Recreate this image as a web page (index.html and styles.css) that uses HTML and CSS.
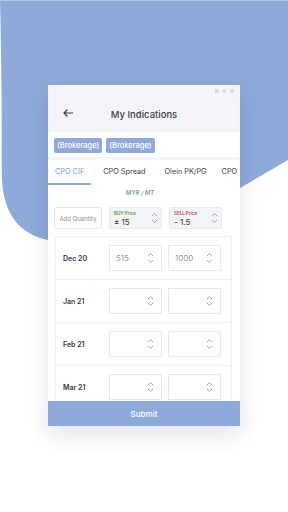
FILE: index.html
```html
<!DOCTYPE html>
<html lang="en">
<head>
  <meta charset="UTF-8">
  <title>My Indications</title>
  <link rel="stylesheet" href="styles.css">
</head>
<body>

  <svg class="backdrop" width="288" height="260" viewBox="0 0 288 260">
    <path d="M0 0 H288 V160 L240 188 C160 235 90 250 48 240 C20 234 4 215 2 180 C1 150 3 130 0 0 Z" fill="#8daadb"/>
    <rect x="0" y="0" width="288" height="1" fill="#b4c6e8"/>
  </svg>

  <div class="card">
    <div class="statusbar">
      <span class="sb-square"></span>
      <span class="sb-dot"></span>
      <span class="sb-tri"></span>
    </div>

    <div class="appbar">
      <svg class="back" width="10" height="8" viewBox="0 0 10 8">
        <path d="M9.5 4 H1 M4 1 L1 4 L4 7" fill="none" stroke="#333a45" stroke-width="1.2" stroke-linecap="round" stroke-linejoin="round"/>
      </svg>
      <h1 class="title">My Indications</h1>
    </div>

    <div class="chips">
      <span class="chip">(Brokerage)</span>
      <span class="chip">(Brokerage)</span>
    </div>

    <div class="tabs">
      <span class="tab active">CPO CIF</span>
      <span class="tab">CPO Spread</span>
      <span class="tab">Olein PK/PG</span>
      <span class="tab">CPO</span>
    </div>

    <div class="content">
      <div class="unit">MYR / MT</div>

      <div class="price-row">
        <div class="qty">Add Quantity</div>
        <div class="price-box">
          <div class="price-text">
            <span class="price-label buy">BUY Price</span>
            <span class="price-value">± 15</span>
          </div>
          <svg class="spin" width="7" height="12" viewBox="0 0 7 12"><path d="M1 4 L3.5 1.5 L6 4 M1 8 L3.5 10.5 L6 8" fill="none" stroke="#8e9bb8" stroke-width="0.9"/></svg>
        </div>
        <div class="price-box">
          <div class="price-text">
            <span class="price-label sell">SELL Price</span>
            <span class="price-value">- 1.5</span>
          </div>
          <svg class="spin" width="7" height="12" viewBox="0 0 7 12"><path d="M1 4 L3.5 1.5 L6 4 M1 8 L3.5 10.5 L6 8" fill="none" stroke="#8e9bb8" stroke-width="0.9"/></svg>
        </div>
      </div>

      <div class="grid">
        <div class="grid-row">
          <span class="month">Dec 20</span>
          <div class="cell"><span class="cell-value">515</span><svg class="spin" width="7" height="12" viewBox="0 0 7 12"><path d="M1 4 L3.5 1.5 L6 4 M1 8 L3.5 10.5 L6 8" fill="none" stroke="#8e9bb8" stroke-width="0.9"/></svg></div>
          <div class="cell"><span class="cell-value">1000</span><svg class="spin" width="7" height="12" viewBox="0 0 7 12"><path d="M1 4 L3.5 1.5 L6 4 M1 8 L3.5 10.5 L6 8" fill="none" stroke="#8e9bb8" stroke-width="0.9"/></svg></div>
        </div>
        <div class="grid-row">
          <span class="month">Jan 21</span>
          <div class="cell"><span class="cell-value"></span><svg class="spin" width="7" height="12" viewBox="0 0 7 12"><path d="M1 4 L3.5 1.5 L6 4 M1 8 L3.5 10.5 L6 8" fill="none" stroke="#8e9bb8" stroke-width="0.9"/></svg></div>
          <div class="cell"><span class="cell-value"></span><svg class="spin" width="7" height="12" viewBox="0 0 7 12"><path d="M1 4 L3.5 1.5 L6 4 M1 8 L3.5 10.5 L6 8" fill="none" stroke="#8e9bb8" stroke-width="0.9"/></svg></div>
        </div>
        <div class="grid-row">
          <span class="month">Feb 21</span>
          <div class="cell"><span class="cell-value"></span><svg class="spin" width="7" height="12" viewBox="0 0 7 12"><path d="M1 4 L3.5 1.5 L6 4 M1 8 L3.5 10.5 L6 8" fill="none" stroke="#8e9bb8" stroke-width="0.9"/></svg></div>
          <div class="cell"><span class="cell-value"></span><svg class="spin" width="7" height="12" viewBox="0 0 7 12"><path d="M1 4 L3.5 1.5 L6 4 M1 8 L3.5 10.5 L6 8" fill="none" stroke="#8e9bb8" stroke-width="0.9"/></svg></div>
        </div>
        <div class="grid-row">
          <span class="month">Mar 21</span>
          <div class="cell"><span class="cell-value"></span><svg class="spin" width="7" height="12" viewBox="0 0 7 12"><path d="M1 4 L3.5 1.5 L6 4 M1 8 L3.5 10.5 L6 8" fill="none" stroke="#8e9bb8" stroke-width="0.9"/></svg></div>
          <div class="cell"><span class="cell-value"></span><svg class="spin" width="7" height="12" viewBox="0 0 7 12"><path d="M1 4 L3.5 1.5 L6 4 M1 8 L3.5 10.5 L6 8" fill="none" stroke="#8e9bb8" stroke-width="0.9"/></svg></div>
        </div>
      </div>
    </div>

    <button class="submit">Submit</button>
  </div>

</body>
</html>
```

FILE: styles.css
```css
* {
  box-sizing: border-box;
}

body {
  margin: 0;
  width: 288px;
  height: 512px;
  padding-top: 85px;
  background: #fff;
  font-family: Inter, 'Noto Sans', sans-serif;
  position: relative;
  overflow: hidden;
}

.backdrop {
  position: absolute;
  top: 0;
  left: 0;
}

.card {
  position: relative;
  width: 192px;
  height: 341px;
  margin-left: 48px;
  background: #fff;
  box-shadow: 0 8px 22px rgba(40, 50, 70, 0.14);
  display: flex;
  flex-direction: column;
  overflow: hidden;
}

.statusbar {
  height: 12px;
  background: #f4f5f9;
  display: flex;
  justify-content: flex-end;
  align-items: center;
  gap: 3px;
  padding-right: 5px;
}

.sb-square {
  width: 4px;
  height: 4px;
  background: #d9dce3;
}

.sb-dot {
  width: 4px;
  height: 4px;
  border-radius: 50%;
  background: #d9dce3;
}

.sb-tri {
  width: 0;
  height: 0;
  border-left: 3px solid transparent;
  border-right: 3px solid transparent;
  border-top: 5px solid #d9dce3;
}

.appbar {
  height: 35px;
  background: #f4f5f9;
  display: flex;
  align-items: center;
  position: relative;
}

.back {
  margin-left: 15px;
  margin-top: -4px;
}

.title {
  position: absolute;
  left: 0;
  right: 0;
  margin: 0;
  text-align: center;
  font-size: 9.5px;
  font-weight: 500;
  color: #3a3f49;
}

.chips {
  height: 28px;
  display: flex;
  align-items: center;
  gap: 4px;
  padding-left: 6px;
  padding-top: 2px;
  border-bottom: 3px solid #f4f5f8;
}

.chip {
  height: 15px;
  line-height: 15px;
  padding: 0 3px;
  border-radius: 2px;
  background: #8daadb;
  color: #fff;
  font-size: 7.5px;
  font-weight: 500;
}

.tabs {
  height: 25px;
  display: flex;
  gap: 5px;
  white-space: nowrap;
}

.tab {
  padding: 0 7px;
  line-height: 24px;
  font-size: 7.3px;
  color: #3c414b;
  border-bottom: 2px solid transparent;
}

.tab:last-child {
  padding: 0 0 0 3px;
}

.tab.active {
  color: #7e9bd0;
  border-bottom-color: #8daadb;
}

.content {
  flex: 1;
  overflow: hidden;
  padding: 3px 8px 0 6px;
}

.unit {
  text-align: center;
  padding-right: 6px;
  font-size: 6px;
  line-height: 10px;
  font-style: italic;
  font-weight: 600;
  color: #8f97ab;
}

.price-row {
  display: flex;
  gap: 7px;
  margin-top: 9px;
  height: 22px;
}

.qty {
  width: 48px;
  border: 1px solid #e4e7ee;
  border-radius: 3px;
  font-size: 6px;
  color: #8a90a0;
  display: flex;
  align-items: center;
  justify-content: center;
}

.price-box {
  width: 53px;
  background: #f2f4f8;
  border: 1px solid #e7eaf0;
  border-radius: 2px;
  display: flex;
  align-items: center;
  justify-content: space-between;
  padding: 0 3px 0 4px;
}

.price-text {
  display: flex;
  flex-direction: column;
}

.price-label {
  font-size: 4.5px;
  font-weight: 600;
  line-height: 7px;
}

.price-label.buy {
  color: #5e9a3a;
}

.price-label.sell {
  color: #d0453e;
}

.price-value {
  font-size: 8px;
  line-height: 10px;
  color: #2f343d;
}

.grid {
  margin-top: 7px;
  margin-left: 1px;
  border: 1px solid #eef0f5;
}

.grid-row {
  height: 43px;
  display: flex;
  align-items: center;
  border-bottom: 1px solid #eef0f5;
}

.month {
  width: 53px;
  padding-left: 7px;
  font-size: 7px;
  font-weight: 600;
  color: #353a44;
}

.cell {
  width: 53px;
  height: 26px;
  margin-right: 6px;
  border: 1px solid #e6e9f0;
  display: flex;
  align-items: center;
  justify-content: space-between;
  padding: 0 7px 0 6px;
}

.cell-value {
  font-size: 8px;
  color: #8e9ab8;
}

.submit {
  height: 25px;
  flex-shrink: 0;
  border: none;
  background: #8daadb;
  color: #fff;
  font-family: inherit;
  font-size: 8px;
  font-weight: 500;
}
```
